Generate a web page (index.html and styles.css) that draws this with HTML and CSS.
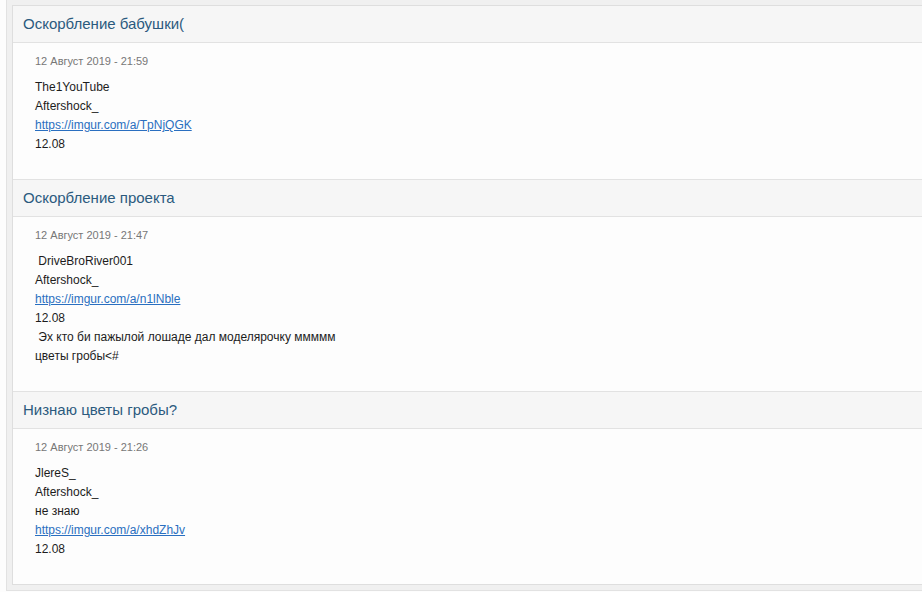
FILE: index.html
```html
<!DOCTYPE html>
<html lang="ru">
  <head>
    <meta charset="UTF-8" />
    <title>Жалобы</title>
    <link rel="stylesheet" href="styles.css">
  </head>
  <body>
    <div class="wrap">
      <div class="card">
        <!-- post 1 -->
        <div class="post">
          <h3 class="post-title">Оскорбление бабушки(</h3>
          <div class="post-body">
            <div class="post-date">12 Август 2019 - 21:59</div>
            <div class="post-text">
              The1YouTube<br />
              Aftershock_<br />
              <a href="#">https://imgur.com/a/TpNjQGK</a><br />
              12.08
            </div>
          </div>
        </div>

        <!-- post 2 -->
        <div class="post">
          <h3 class="post-title">Оскорбление проекта</h3>
          <div class="post-body">
            <div class="post-date">12 Август 2019 - 21:47</div>
            <div class="post-text">
              &nbsp;DriveBroRiver001<br />
              Aftershock_<br />
              <a href="#">https://imgur.com/a/n1lNble</a><br />
              12.08<br />
              &nbsp;Эх кто би пажылой лошаде дал моделярочку ммммм<br />
              цветы гробы&lt;#
            </div>
          </div>
        </div>

        <!-- post 3 -->
        <div class="post">
          <h3 class="post-title">Низнаю цветы гробы?</h3>
          <div class="post-body">
            <div class="post-date">12 Август 2019 - 21:26</div>
            <div class="post-text">
              JlereS_<br />
              Aftershock_<br />
              не знаю<br />
              <a href="#">https://imgur.com/a/xhdZhJv</a><br />
              12.08
            </div>
          </div>
        </div>
      </div>
    </div>
  </body>
</html>
```

FILE: styles.css
```css
body {
  margin: 0;
  padding: 0;
  background-color: #fdfdfd;
  font-family: "Liberation Sans", Arial, sans-serif;
  overflow: hidden;
}
.wrap {
  width: 940px;
  margin-left: 6px;
  padding: 5px 0 5px 5px;
  background-color: #f0f0f0;
  border-left: 1px solid #e2e2e2;
  border-bottom: 1px solid #e2e2e2;
}
.card {
  background-color: #fdfdfd;
  border: 1px solid #dedede;
}
.post + .post {
  border-top: 1px solid #e2e2e2;
}
.post-title {
  margin: 0;
  padding: 9px 10px;
  font-size: 15px;
  line-height: 18px;
  font-weight: normal;
  color: #2b5a7e;
  background-color: #f6f6f6;
  border-bottom: 1px solid #e2e2e2;
}
.post-body {
  padding: 10px 22px 25px;
}
.post-date {
  font-size: 11px;
  line-height: 16px;
  color: #777;
}
.post-text {
  margin-top: 9px;
  font-size: 12px;
  line-height: 19px;
  color: #1c1c1c;
}
.post-text a {
  color: #2a6fc0;
}
```
